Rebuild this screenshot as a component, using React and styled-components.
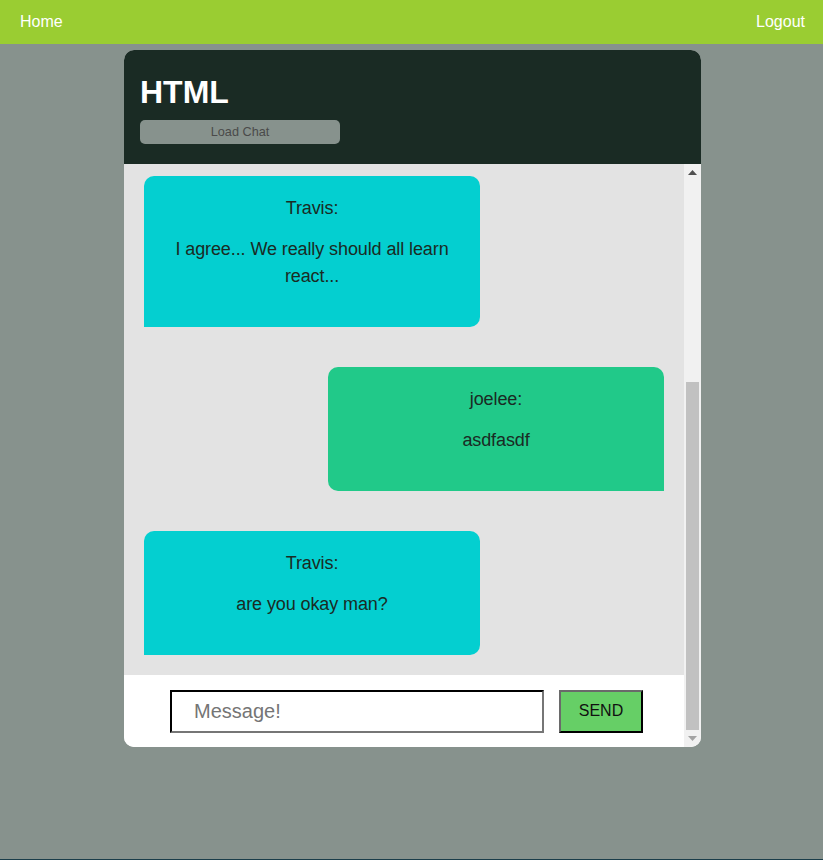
import React, { useLayoutEffect, useRef, useState } from "react";
import styled, { createGlobalStyle } from "styled-components";

const GlobalStyle = createGlobalStyle`
  html, body {
    margin: 0;
    padding: 0;
  }
  body {
    background: #87928d;
    font-family: "Liberation Sans", Arial, sans-serif;
  }
`;

const Page = styled.div`
  min-height: 100vh;
  display: flex;
  flex-direction: column;
`;

const NavBar = styled.nav`
  height: 44px;
  background: #9acd32;
  display: flex;
  align-items: center;
  justify-content: space-between;
  padding: 0 18px 0 20px;
  & a {
    color: white;
    font-size: 16px;
    text-decoration: none;
    cursor: pointer;
  }
`;

const ChatCard = styled.div`
  width: 577px;
  margin: 6px 0 0 124px;
  border-radius: 10px;
  overflow: hidden;
  background: white;
`;

const ChatHeader = styled.div`
  background: #1a2b24;
  padding: 24px 16px 20px;
`;

const Title = styled.h1`
  margin: 0 0 9px;
  color: white;
  font-size: 32px;
  font-weight: bold;
  line-height: 37px;
`;

const LoadButton = styled.button`
  width: 200px;
  height: 24px;
  border: none;
  border-radius: 5px;
  background: #87928d;
  color: #4a4a4a;
  font-family: "Liberation Sans", Arial, sans-serif;
  font-size: 12.7px;
  padding: 0;
`;

const ChatBody = styled.div`
  height: 583px;
  display: flex;
`;

const Scroller = styled.div`
  flex: 1;
  overflow-y: scroll;
  scrollbar-width: none;
  &::-webkit-scrollbar {
    display: none;
  }
`;

const ScrollTrack = styled.div`
  width: 17px;
  background: #f1f1f1;
  display: flex;
  flex-direction: column;
`;

const ArrowButton = styled.div`
  height: 17px;
  display: flex;
  align-items: center;
  justify-content: center;
  & svg {
    fill: ${({ disabled }) => (disabled ? "#a3a3a3" : "#505050")};
  }
`;

const ThumbRail = styled.div`
  flex: 1;
  display: flex;
  flex-direction: column;
`;

const Thumb = styled.div`
  margin: 0 2px;
  background: #c1c1c1;
`;

const MessageList = styled.div`
  background: #e3e3e3;
  display: flex;
  flex-direction: column;
`;

const Bubble = styled.div`
  width: 60%;
  box-sizing: border-box;
  margin: 20px;
  padding: 19px 20px 37px;
  text-align: center;
  color: #1a2b24;
  font-size: 18px;
  line-height: 27px;
  letter-spacing: -0.1px;
  align-self: ${({ mine }) => (mine ? "flex-end" : "flex-start")};
  background: ${({ mine }) => (mine ? "#21c989" : "#04cfd0")};
  border-radius: ${({ mine }) => (mine ? "10px 10px 0 10px" : "10px 10px 10px 0")};
  & p {
    margin: 0;
  }
`;

const Sender = styled.p`
  margin-bottom: 14px !important;
`;

const Form = styled.form`
  height: 72px;
  background: white;
  display: flex;
  align-items: center;
  justify-content: center;
  gap: 15px;
  padding-left: 5px;
`;

const MessageInput = styled.input`
  width: 374px;
  height: 43px;
  box-sizing: border-box;
  border: 2px inset #767676;
  border-top-color: #222;
  border-left-color: #222;
  padding: 0 22px;
  font-family: "Liberation Sans", Arial, sans-serif;
  font-size: 20px;
  &::placeholder {
    color: #757575;
  }
`;

const SendButton = styled.button`
  width: 84px;
  height: 43px;
  box-sizing: border-box;
  background: #66cf66;
  border: 2px outset #222;
  border-top-color: #6a6a6a;
  border-left-color: #6a6a6a;
  font-family: "Liberation Sans", Arial, sans-serif;
  font-size: 16px;
  color: #111;
`;

const Footer = styled.div`
  margin-top: auto;
  height: 1px;
  background: #1a3d4a;
`;

const messages = [
  { name: "joelee", text: "Hey guys!", mine: true },
  { name: "Travis", text: "what's up", mine: false },
  { name: "Travis", text: "I agree... We really should all learn react...", mine: false },
  { name: "joelee", text: "asdfasdf", mine: true },
  { name: "Travis", text: "are you okay man?", mine: false },
];

const App = () => {
  const scrollRef = useRef(null);
  const railRef = useRef(null);
  const [thumb, setThumb] = useState({ top: 0, height: 0, atEnd: false });

  const updateThumb = () => {
    const el = scrollRef.current;
    const rail = railRef.current;
    if (!el || !rail) return;
    const railH = rail.clientHeight;
    const ratio = el.clientHeight / el.scrollHeight;
    setThumb({
      top: (el.scrollTop / el.scrollHeight) * railH,
      height: ratio * railH,
      atEnd: el.scrollTop + el.clientHeight >= el.scrollHeight - 1,
    });
  };

  useLayoutEffect(() => {
    if (scrollRef.current) {
      scrollRef.current.scrollTop = scrollRef.current.scrollHeight;
    }
    updateThumb();
  }, []);

  return (
    <Page>
      <GlobalStyle />
      <NavBar>
        <a>Home</a>
        <a>Logout</a>
      </NavBar>
      <ChatCard>
        <ChatHeader>
          <Title>HTML</Title>
          <LoadButton>Load Chat</LoadButton>
        </ChatHeader>
        <ChatBody>
          <Scroller ref={scrollRef} onScroll={updateThumb}>
            <MessageList>
              {messages.map((m, i) => (
                <Bubble key={i} mine={m.mine}>
                  <Sender>{m.name}:</Sender>
                  <p>{m.text}</p>
                </Bubble>
              ))}
            </MessageList>
            <Form onSubmit={(e) => e.preventDefault()}>
              <MessageInput placeholder="Message!" />
              <SendButton type="submit">SEND</SendButton>
            </Form>
          </Scroller>
          <ScrollTrack>
            <ArrowButton>
              <svg width="9" height="5" viewBox="0 0 9 5">
                <path d="M4.5 0 L9 5 L0 5 Z" />
              </svg>
            </ArrowButton>
            <ThumbRail ref={railRef}>
              <Thumb style={{ marginTop: thumb.top, height: thumb.height }} />
            </ThumbRail>
            <ArrowButton disabled={thumb.atEnd}>
              <svg width="9" height="5" viewBox="0 0 9 5">
                <path d="M0 0 L9 0 L4.5 5 Z" />
              </svg>
            </ArrowButton>
          </ScrollTrack>
        </ChatBody>
      </ChatCard>
      <Footer />
    </Page>
  );
};

export default App;
